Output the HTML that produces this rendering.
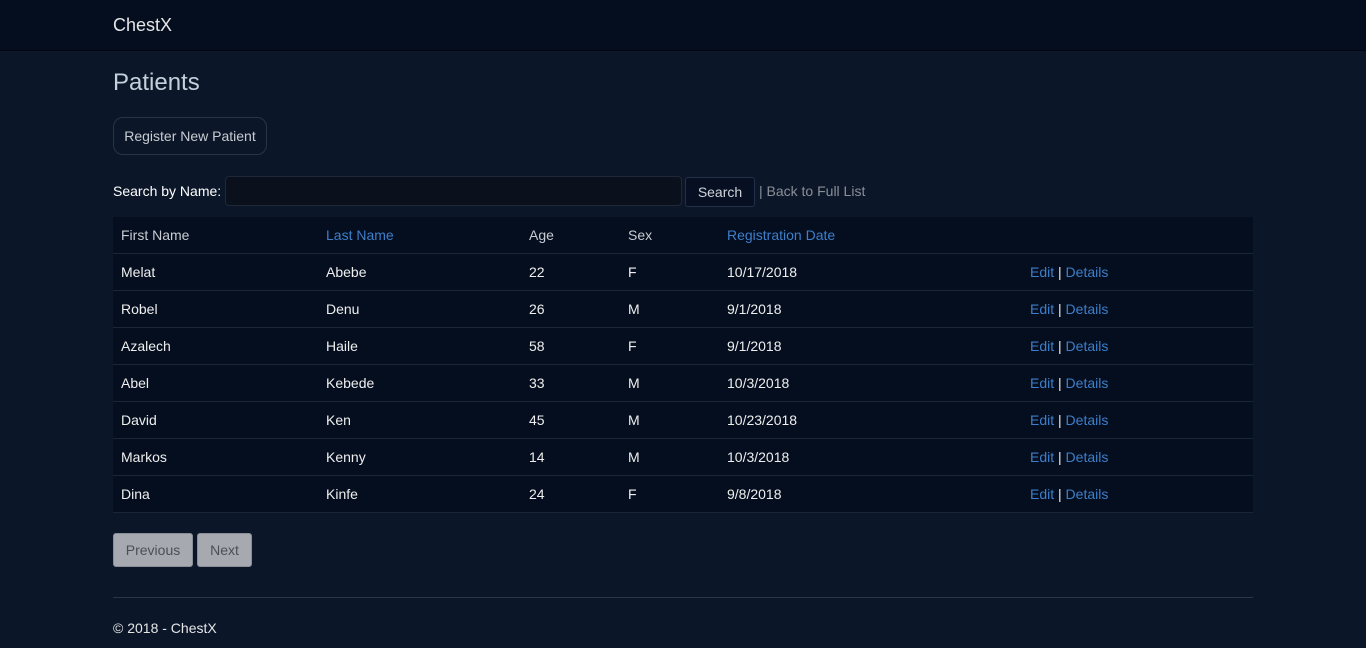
<!DOCTYPE html>
<html><head><meta charset="utf-8"><style>
body{margin:0;width:1366px;height:648px;overflow:hidden;background:#0b1628;font-family:"Liberation Sans",sans-serif;font-size:14px;color:#fff;}
.nav{height:50px;background:#040e1f;border-bottom:1px solid #02060e;}
.nav span{position:absolute;left:113px;top:15px;font-size:18px;color:#e6e6e6;}
.c{position:absolute;left:113px;width:1140px;}
h2{position:absolute;left:113px;top:69px;margin:0;font-size:24px;font-weight:normal;color:#c4d0dc;}
.reg{position:absolute;left:113px;top:117px;width:152px;height:36px;border:1px solid #2a3446;border-radius:10px;box-sizing:border-box;width:154px;height:38px;color:#c8ccd2;line-height:36px;text-align:center;}
.srch{top:176px;height:30px;line-height:30px;}
.inp{position:absolute;left:112px;top:0;width:455px;height:28px;border:1px solid #1f2838;border-radius:4px;background:#0a111d;}
.btn{position:absolute;left:572px;top:1px;width:68px;height:28px;border:1px solid #24304a;border-radius:3px;background:#061022;color:#d0d4da;text-align:center;line-height:28px;}
table{position:absolute;left:113px;top:217px;width:1140px;border-collapse:collapse;background:#050e1e;}
td{height:36px;border-bottom:1px solid #1a2536;padding:0 0 0 8px;color:#eee;}
thead td{color:#c8ccd2;}
a{color:#3c7fcb;text-decoration:none;}
.pg{position:absolute;top:533px;height:32px;background:#a6a9b0;border:1px solid #8a8e96;border-radius:3px;color:#4a4f58;line-height:32px;text-align:center;box-sizing:border-box;height:34px;}
hr{position:absolute;left:113px;top:597px;width:1140px;margin:0;border:0;border-top:1px solid #2a3648;}
.ft{position:absolute;left:113px;top:620px;color:#e6e6e6;}
</style></head><body>
<div class="nav"><span>ChestX</span></div>
<h2>Patients</h2>
<div class="reg">Register New Patient</div>
<div class="c srch">Search by Name:<div class="inp"></div><div class="btn">Search</div><span style="position:absolute;left:646px;color:#8a8f98">| Back to Full List</span></div>
<table>
<thead><tr><td style="width:197px">First Name</td><td style="width:195px"><a>Last Name</a></td><td style="width:91px">Age</td><td style="width:91px">Sex</td><td style="width:295px"><a>Registration Date</a></td><td></td></tr></thead>
<tbody>
<tr><td>Melat</td><td>Abebe</td><td>22</td><td>F</td><td>10/17/2018</td><td><a>Edit</a> | <a>Details</a></td></tr>
<tr><td>Robel</td><td>Denu</td><td>26</td><td>M</td><td>9/1/2018</td><td><a>Edit</a> | <a>Details</a></td></tr>
<tr><td>Azalech</td><td>Haile</td><td>58</td><td>F</td><td>9/1/2018</td><td><a>Edit</a> | <a>Details</a></td></tr>
<tr><td>Abel</td><td>Kebede</td><td>33</td><td>M</td><td>10/3/2018</td><td><a>Edit</a> | <a>Details</a></td></tr>
<tr><td>David</td><td>Ken</td><td>45</td><td>M</td><td>10/23/2018</td><td><a>Edit</a> | <a>Details</a></td></tr>
<tr><td>Markos</td><td>Kenny</td><td>14</td><td>M</td><td>10/3/2018</td><td><a>Edit</a> | <a>Details</a></td></tr>
<tr><td>Dina</td><td>Kinfe</td><td>24</td><td>F</td><td>9/8/2018</td><td><a>Edit</a> | <a>Details</a></td></tr>
</tbody></table>
<div class="pg" style="left:113px;width:80px">Previous</div>
<div class="pg" style="left:197px;width:55px">Next</div>
<hr>
<div class="ft">© 2018 - ChestX</div>
</body></html>
